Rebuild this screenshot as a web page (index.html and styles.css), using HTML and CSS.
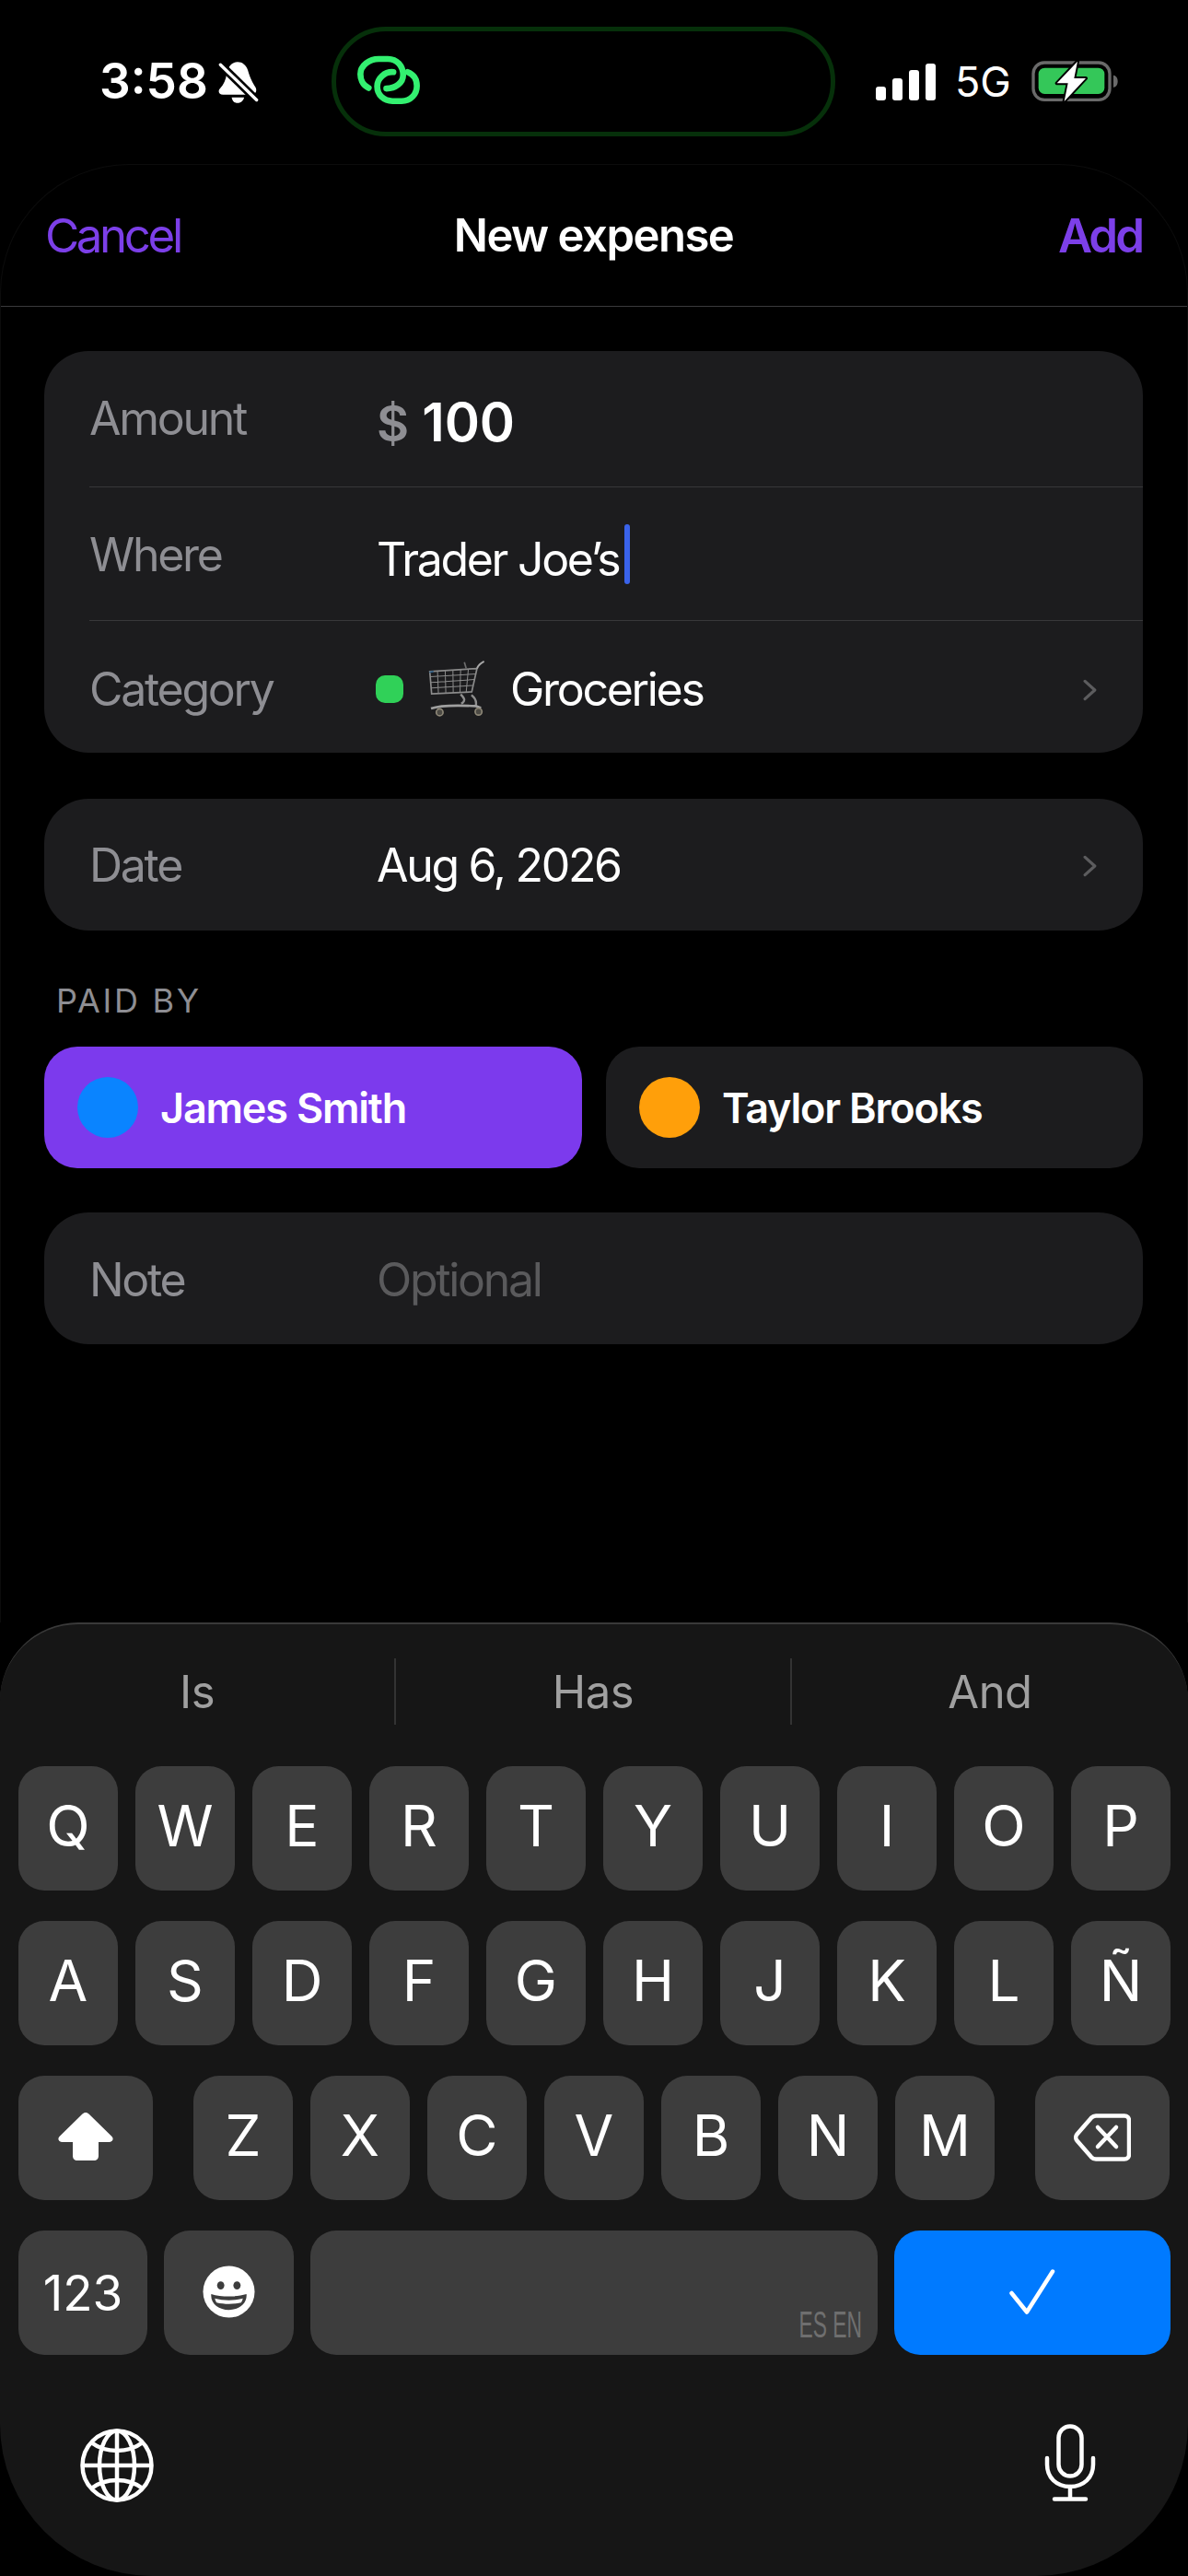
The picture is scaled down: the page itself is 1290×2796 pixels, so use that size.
FILE: index.html
```html
<!DOCTYPE html>
<html lang="en">
<head>
<meta charset="utf-8">
<title>New expense</title>
<link rel="stylesheet" href="styles.css">
</head>
<body>
<div class="page">
  <header class="status">
    <div class="status-left">
      <span class="time">3:58</span>
      <svg class="bell" viewBox="535 135 130 135">
        <path fill="#fff" d="M597 138C612 138 625 148 630 165C637 190 645 205 655 220C660 232 655 243 640 243L550 243C537 243 532 232 542 222C552 210 560 195 562 175C566 150 582 138 597 138Z"/>
        <path fill="#fff" d="M578 252L618 252C615 265 605 270 597 270C588 270 580 265 578 252Z"/>
        <path stroke="#000" stroke-width="26" d="M530 135L670 272"/>
        <path stroke="#fff" stroke-width="10" stroke-linecap="round" d="M542 147L658 260"/>
      </svg>
    </div>
    <div class="island">
      <svg class="link" viewBox="985 125 205 160" fill="none" stroke="#33f070" stroke-width="20" stroke-linecap="round">
        <path d="M1022 232C1000 222 995 200 995 187C995 158 1025 137 1055 137L1085 137C1115 137 1135 160 1135 190C1135 215 1110 234 1080 234"/>
        <path d="M1103 180C1075 178 1050 200 1050 227C1050 255 1072 275 1100 275L1130 275C1160 275 1180 252 1180 225C1180 205 1170 188 1150 180"/>
      </svg>
    </div>
    <div class="status-right">
      <svg class="signal" viewBox="0 0 65 40" fill="#fff">
        <rect x="0" y="25" width="11" height="15" rx="3"/>
        <rect x="18" y="16" width="11" height="24" rx="3"/>
        <rect x="36" y="7" width="11" height="33" rx="3"/>
        <rect x="54" y="0" width="11" height="40" rx="3"/>
      </svg>
      <span class="net">5G</span>
      <svg class="battery" viewBox="595 70 285 140">
        <rect x="601" y="79" width="249" height="121" rx="36" fill="none" stroke="#6a6a6a" stroke-width="10"/>
        <rect x="618" y="96" width="215" height="85" rx="20" fill="#34c759"/>
        <path d="M862 120C872 122 876 130 876 140C876 150 872 158 862 160Z" fill="#6a6a6a"/>
        <path d="M745 75L678 146L714 146L702 205L772 130L734 130Z" fill="#fff" stroke="#000" stroke-width="12" paint-order="stroke" stroke-linejoin="round"/>
      </svg>
    </div>
  </header>

  <main class="sheet">
    <nav class="nav">
      <span class="nav-cancel">Cancel</span>
      <span class="nav-title">New expense</span>
      <span class="nav-add">Add</span>
    </nav>
    <div class="form">
      <section class="card">
        <div class="row row-amount">
          <span class="label">Amount</span>
          <span class="amount"><span class="currency">$</span> 100</span>
        </div>
        <div class="row row-where">
          <span class="label">Where</span>
          <span class="value value-low">Trader Joe’s</span><span class="caret"></span>
        </div>
        <div class="row row-cat">
          <span class="label">Category</span>
          <span class="dot"></span>
          <svg class="cart" viewBox="255 72 185 190" fill="none" stroke="#8b8b8b" stroke-width="3">
            <path stroke-width="5" d="M260 110L413 100L396 176L266 182Z"/>
            <path d="M285 108L288 181M310 106L312 180M335 105L336 179M360 103L358 178M385 102L378 177M262 127L409 118M264 145L405 136M265 163L400 155"/>
            <path stroke="#6d6d6d" stroke-width="5" d="M372 80L378 100"/>
            <path stroke="#a8a8a8" stroke-width="6" d="M413 100C417 90 424 83 436 77"/>
            <path stroke="#8f8f8f" stroke-width="7" d="M360 184C372 196 378 205 362 214M395 186C410 198 413 210 408 224"/>
            <path stroke="#a0a0a0" stroke-width="8" d="M264 230C285 222 320 217 410 222L426 228"/>
            <circle cx="292" cy="242" r="11" fill="#4c4a44" stroke="#8d8777" stroke-width="5"/>
            <circle cx="418" cy="240" r="11" fill="#4c4a44" stroke="#8d8777" stroke-width="5"/>
            <path stroke="#2c5a80" stroke-width="5" d="M259 112L272 110"/>
          </svg>
          <span class="value">Groceries</span>
          <svg class="chevron" viewBox="0 0 15 22" fill="none" stroke="#5c5c5e" stroke-width="3" stroke-linecap="round" stroke-linejoin="round"><path d="M2 2L12 11L2 20"/></svg>
        </div>
      </section>

      <section class="card card-gap">
        <div class="row row-single">
          <span class="label">Date</span>
          <span class="value">Aug 6, 2026</span>
          <svg class="chevron" viewBox="0 0 15 22" fill="none" stroke="#5c5c5e" stroke-width="3" stroke-linecap="round" stroke-linejoin="round"><path d="M2 2L12 11L2 20"/></svg>
        </div>
      </section>

      <h2 class="section-label">PAID BY</h2>
      <div class="payers">
        <div class="payer payer-on"><span class="avatar avatar-blue"></span><span class="payer-name">James Smith</span></div>
        <div class="payer"><span class="avatar avatar-orange"></span><span class="payer-name">Taylor Brooks</span></div>
      </div>

      <section class="card card-note">
        <div class="row row-single row-note">
          <span class="label">Note</span>
          <span class="value placeholder">Optional</span>
        </div>
      </section>
    </div>
  </main>

  <footer class="keyboard">
    <div class="suggest">
      <span class="word">Is</span>
      <span class="word">Has</span>
      <span class="word">And</span>
    </div>
    <div class="keys">
      <div class="key-row">
        <span class="key">Q</span><span class="key">W</span><span class="key">E</span><span class="key">R</span><span class="key">T</span><span class="key">Y</span><span class="key">U</span><span class="key">I</span><span class="key">O</span><span class="key">P</span>
      </div>
      <div class="key-row">
        <span class="key">A</span><span class="key">S</span><span class="key">D</span><span class="key">F</span><span class="key">G</span><span class="key">H</span><span class="key">J</span><span class="key">K</span><span class="key">L</span><span class="key">Ñ</span>
      </div>
      <div class="key-row key-row-mid">
        <span class="key key-wide">
          <svg class="ico-shift" viewBox="0 0 60 52" fill="#fff"><path d="M30 0C31.500 0 32.500 .6 33.500 1.600L58.500 26C60.700 28.200 59.500 32 56 32L44 32L44 47C44 50 42 52 39 52L21 52C18 52 16 50 16 47L16 32L4 32C.5 32 -.7 28.200 1.500 26L26.500 1.600C27.500 .6 28.500 0 30 0Z"/></svg>
        </span>
        <div class="key-group">
          <span class="key">Z</span><span class="key">X</span><span class="key">C</span><span class="key">V</span><span class="key">B</span><span class="key">N</span><span class="key">M</span>
        </div>
        <span class="key key-wide">
          <svg class="ico-del" viewBox="0 0 62 52" fill="none" stroke="#fff" stroke-width="4.500" stroke-linecap="round" stroke-linejoin="round">
            <path d="M24 2.500L55 2.500C58 2.500 60 4.500 60 7.500L60 44.500C60 47.500 58 49.500 55 49.500L24 49.500C22 49.500 20.500 48.800 19 47.300L3.500 29.500C1.800 27.500 1.800 24.500 3.500 22.500L19 4.700C20.500 3.200 22 2.500 24 2.500Z"/>
            <path d="M26 15L46 36M46 15L26 36"/>
          </svg>
        </span>
      </div>
      <div class="key-row key-row-bottom">
        <span class="key key-num">123</span>
        <span class="key key-emoji">
          <svg class="ico-emoji" viewBox="0 0 58 58"><circle cx="29" cy="29" r="28.500" fill="#fff"/><ellipse cx="20" cy="22" rx="4" ry="4.500" fill="#3d3d3d"/><ellipse cx="38" cy="22" rx="4" ry="4.500" fill="#3d3d3d"/><path d="M9.500 31.500C21 35 37 35 48.500 31.500C49.500 42 40 49 29 49C18 49 8.500 42 9.500 31.500Z" fill="#3d3d3d"/><path d="M13.500 36.500C23 39 35 39 44.500 36.500C44 38.500 43.500 39.500 42.500 41C34 43 24 43 15.500 41C14.500 39.500 14 38.500 13.500 36.500Z" fill="#fff"/></svg>
        </span>
        <span class="key key-space"><span class="lang">ES EN</span></span>
        <span class="key key-return">
          <svg class="ico-check" viewBox="0 0 50 50" fill="none" stroke="#fff" stroke-width="4.500" stroke-linecap="round" stroke-linejoin="round"><path d="M2.500 26L19 46.500L47 2.500"/></svg>
        </span>
      </div>
    </div>
    <div class="kb-tools">
      <svg class="ico-globe" viewBox="0 0 80 80" fill="none" stroke="#fff" stroke-width="4.500">
        <circle cx="40" cy="40" r="37.500"/>
        <ellipse cx="40" cy="40" rx="19" ry="37.500"/>
        <path d="M40 2.500V77.500M2.500 40H77.500"/>
        <path d="M12 15C28 27 52 27 68 15M12 65C28 53 52 53 68 65"/>
      </svg>
      <svg class="ico-mic" viewBox="0 0 56 84" fill="none" stroke="#fff" stroke-width="4.500" stroke-linecap="round">
        <rect x="15.500" y="2.500" width="25" height="54" rx="12.500"/>
        <path d="M3 37V44C3 58 13 68 28 68C43 68 53 58 53 44V37"/>
        <path d="M28 68V81M11 81.500H45"/>
      </svg>
    </div>
  </footer>
</div>
</body>
</html>
```
FILE: styles.css
```css
* { box-sizing: border-box; }
html, body { margin: 0; padding: 0; background: #000; }
body { font-family: Inter, "Noto Sans", sans-serif; color: #fff; }
.page { width: 1290px; height: 2796px; display: flex; flex-direction: column; overflow: hidden; background: #000; }

/* Status bar */
.status { height: 178px; flex: none; padding-top: 29px; display: grid; grid-template-columns: 360px 547px 1fr; align-items: start; }
.status-left { height: 119px; padding-left: 108px; display: flex; align-items: center; gap: 11px; }
.time { font-size: 53px; font-weight: 600; line-height: 1; }
.bell { width: 44px; height: 46px; }
.island { height: 119px; border: 5px solid #06300a; border-radius: 59px; background: #000; display: flex; align-items: center; padding-left: 23px; }
.link { width: 68px; height: 53px; margin-top: -5px; }
.status-right { height: 119px; padding-left: 44px; display: flex; align-items: center; }
.signal { width: 65px; height: 40px; }
.net { margin-left: 21px; font-size: 45px; line-height: 1; }
.battery { width: 95px; height: 46.67px; margin-left: 22px; }

/* Sheet */
.sheet { flex: 1; min-height: 0; border: 1px solid #0c0c0c; border-bottom: 0; border-radius: 140px 140px 0 0; overflow: hidden; }
.nav { height: 154px; padding: 0 49px 0 48px; border-bottom: 1px solid #3a3a3c; display: grid; grid-template-columns: 1fr auto 1fr; align-items: center; font-size: 51px; }
.nav-cancel { color: #7c3fe8; letter-spacing: -3.400px; }
.nav-title { font-weight: 600; font-size: 49px; letter-spacing: -1.500px; }
.nav-add { color: #7c3fe8; text-align: right; font-weight: 600; letter-spacing: -3px; }
.form { padding: 48px 48px 0 47px; }

/* Cards */
.card { background: #1c1c1e; border-radius: 48px; overflow: hidden; }
.card-gap { margin-top: 50px; }
.card-note { margin-top: 48px; }
.row { display: flex; align-items: center; margin-left: 49px; padding-right: 49px; font-size: 50px; letter-spacing: -2.300px; }
.row-amount { height: 148px; border-bottom: 1px solid #38383a; }
.row-where { height: 145px; border-bottom: 1px solid #38383a; }
.row-cat { height: 143px; padding-top: 4px; }
.row-single { height: 143px; }
.row-note { padding-top: 2px; }
.label { width: 312px; flex: none; color: #8e8e93; }
.row-amount .label { padding-bottom: 2px; }
.row-where .label { padding-top: 2px; }
.value { color: #fff; }
.value-low { padding-top: 12px; }
.placeholder { color: #5a5a5c; }
.amount { font-size: 58px; font-weight: 600; padding-top: 6px; letter-spacing: -.2px; }
.currency { color: #8e8e93; font-size: 54px; }
.caret { width: 6px; height: 65px; margin-left: 6px; border-radius: 3px; background: #3a63ea; }
.dot { width: 30px; height: 30px; margin-left: -1px; border-radius: 10px; background: #30d158; }
.cart { width: 62px; height: 64px; margin-left: 27px; }
.row-cat .value { margin-left: 27px; }
.chevron { width: 16px; height: 24px; margin-left: auto; margin-top: 3px; }

/* Paid by */
.section-label { margin: 0; padding: 54px 0 28px 13px; font-size: 36px; line-height: 44px; font-weight: 400; letter-spacing: 2.700px; color: #8e8e93; }
.payers { display: grid; grid-template-columns: 584px 583px; gap: 26px; }
.payer { height: 132px; padding-left: 36px; border-radius: 36px; background: #1c1c1e; display: flex; align-items: center; gap: 24px; }
.payer-on { background: #7c3aed; }
.avatar { width: 66px; height: 66px; border-radius: 50%; flex: none; }
.avatar-blue { background: #0a84ff; }
.avatar-orange { background: #ff9f0a; }
.payer-name { font-size: 45px; font-weight: 600; letter-spacing: -1.200px; }

/* Keyboard */
.keyboard { flex: none; height: 1035px; background: #161616; border-top: 2px solid #3a3a3a; border-radius: 85px 85px 165px 165px; padding-top: 37px; }
.suggest { display: grid; grid-template-columns: repeat(3, 1fr); height: 72px; font-size: 49px; letter-spacing: -.5px; color: #a0a0a0; }
.word { display: flex; align-items: center; justify-content: center; border-right: 2px solid #333; }
.word:last-child { border-right: 0; }
.keys { margin-top: 45px; padding-left: 20px; display: flex; flex-direction: column; gap: 33px; }
.key-row { display: flex; gap: 19px; height: 135px; }
.key-row-mid { gap: 44px; }
.key-row-bottom { gap: 18px; }
.key-group { display: flex; gap: 19px; }
.key { width: 108px; height: 135px; flex: none; border-radius: 28px; background: #3d3d3d; display: flex; align-items: center; justify-content: center; padding-bottom: 6px; font-size: 62px; color: #fff; }
.key-wide { width: 146px; padding-bottom: 0; }
.key-num { width: 140px; font-size: 53px; padding-bottom: 0; }
.key-emoji { width: 141px; padding-bottom: 0; }
.key-space { width: 616px; position: relative; }
.key-return { width: 300px; background: #007aff; padding-bottom: 0; }
.lang { position: absolute; right: 17px; bottom: 11px; font-family: "Liberation Sans", sans-serif; font-size: 40px; line-height: 44px; color: #6f6f6f; transform: scaleX(.57); transform-origin: right center; }
.ico-shift { width: 60px; height: 52px; margin-top: -4px; }
.ico-del { width: 62px; height: 52px; margin-top: -2px; }
.ico-emoji { width: 57px; height: 57px; margin-top: -3px; }
.ico-check { width: 50px; height: 50px; margin-top: -2px; }
.kb-tools { margin-top: 75px; padding: 0 100px 0 87px; display: flex; justify-content: space-between; align-items: flex-start; }
.ico-globe { width: 80px; height: 80px; margin-top: 5px; }
.ico-mic { width: 56px; height: 84px; }
```
